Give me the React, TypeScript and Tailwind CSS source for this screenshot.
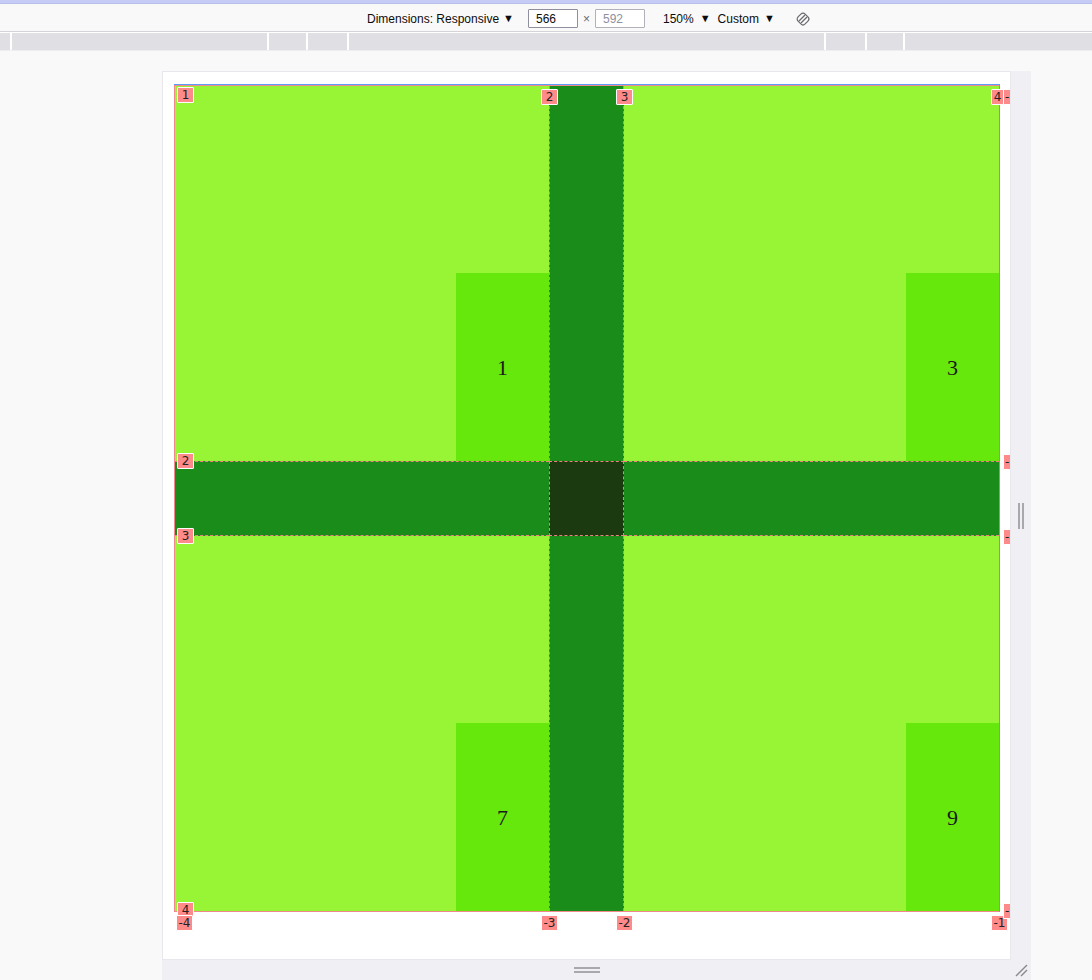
import React from "react";

function Label({ text, className }: { text: string; className: string }) {
    return (
        <div className={`absolute h-[16px] bg-[#ff8a8a] border border-white rounded-[1px] text-[12px] leading-[14px] text-[#222] flex items-center justify-center ${className}`}
            style={{ fontFamily: '"DejaVu Sans", sans-serif' }}>
            {text}
        </div>
    )
}

function Corner({ n }: { n: string }) {
    return (
        <div className="bg-[#98f535] flex items-end justify-end">
            <div className="w-[93px] h-[188px] bg-[#67e80c] flex items-center justify-center text-[22px] text-[#1a1a1a]"
                style={{ fontFamily: '"Liberation Serif", serif' }}>
                {n}
            </div>
        </div>
    )
}

function RotateIcon() {
    return (
        <svg width="16" height="16" viewBox="0 0 16 16" fill="none" stroke="#6a6a6f" strokeWidth="1.2">
            <rect x="3" y="3" width="10" height="10" rx="3" transform="rotate(45 8 8)" />
            <line x1="4" y1="10" x2="10" y2="4" />
            <line x1="6" y1="12" x2="12" y2="6" />
        </svg>
    )
}

export default function App() {
    return (
        <div className="w-[1092px] h-[980px] overflow-hidden bg-[#f9f9fa] flex flex-col" style={{ fontFamily: '"Liberation Sans", "Noto Sans", sans-serif' }}>
            {/* top accent */}
            <div className="h-[4px] bg-[#c5cdf7] border-b border-[#b9bfe8]" />

            {/* toolbar */}
            <div className="h-[28px] flex items-center text-[12px] text-[#0c0c0d] pl-[367px] pt-[2px] border-b border-[#d4d4d8]">
                <span>Dimensions: Responsive</span>
                <span className="ml-[4px] text-[11px]">▼</span>
                <div className="ml-[14px] w-[50px] h-[19px] border border-[#8f8f9d] bg-white rounded-[1px] flex items-center pl-[7px]">566</div>
                <span className="mx-[5px] text-[#6a6a6f]">×</span>
                <div className="w-[50px] h-[19px] border border-[#b1b1b9] bg-white rounded-[1px] flex items-center pl-[7px] text-[#8f8f9d]">592</div>
                <span className="ml-[18px]">150%</span>
                <span className="ml-[6px] text-[11px]">▼</span>
                <span className="ml-[7px]">Custom</span>
                <span className="ml-[5px] text-[11px]">▼</span>
                <div className="ml-[20px] flex items-center"><RotateIcon /></div>
            </div>

            {/* ruler */}
            <div className="h-[19px] border-t border-white flex bg-[#dfdfe4] border-b border-b-[#eeeef0]">
                <div className="w-[10px]" />
                <div className="w-[2px] bg-white" />
                <div className="w-[255px]" />
                <div className="w-[2px] bg-white" />
                <div className="w-[37px]" />
                <div className="w-[2px] bg-white" />
                <div className="w-[39px]" />
                <div className="w-[2px] bg-white" />
                <div className="w-[475px]" />
                <div className="w-[2px] bg-white" />
                <div className="w-[39px]" />
                <div className="w-[2px] bg-white" />
                <div className="w-[36px]" />
                <div className="w-[2px] bg-white" />
                <div className="flex-1" />
            </div>

            {/* page area */}
            <div className="flex-1 pl-[162px] pt-[20px]">
                <div className="w-[869px] flex flex-col">
                    <div className="flex">
                        {/* viewport */}
                        <div className="relative w-[849px] h-[889px] bg-white border border-[#e8e8ec] overflow-hidden">
                            <div className="ml-[11px] mt-[12px] w-[826px] border-t border-r border-[#5b9dfa]">
                                <div className="grid grid-cols-[374px_75px_375px] grid-rows-[375px_75px_375px] border border-[#f08a8a]">
                                    <Corner n="1" />
                                    <div className="bg-[#1a8c1a] border-x border-dashed border-[#f08080]" />
                                    <Corner n="3" />
                                    <div className="bg-[#1a8c1a] border-y border-dashed border-[#f08080]" />
                                    <div className="bg-[#1b3a10] border border-dashed border-[#f08080]" />
                                    <div className="bg-[#1a8c1a] border-y border-dashed border-[#f08080]" />
                                    <Corner n="7" />
                                    <div className="bg-[#1a8c1a] border-x border-dashed border-[#f08080]" />
                                    <Corner n="9" />
                                </div>
                            </div>

                            {/* grid line labels */}
                            <Label text="1" className="w-[17px] left-[14px] top-[15px]" />
                            <Label text="2" className="w-[17px] left-[378px] top-[17px]" />
                            <Label text="3" className="w-[17px] left-[453px] top-[17px]" />
                            <Label text="4" className="w-[13px] left-[828px] top-[17px]" />
                            <Label text="-" className="w-[8px] left-[840px] top-[17px] justify-start pl-[1px]" />

                            <Label text="2" className="w-[17px] left-[14px] top-[381px]" />
                            <Label text="3" className="w-[17px] left-[14px] top-[456px]" />
                            <Label text="-" className="w-[8px] left-[840px] top-[382px] justify-start pl-[1px]" />
                            <Label text="-" className="w-[8px] left-[840px] top-[457px] justify-start pl-[1px]" />

                            <Label text="4" className="w-[17px] left-[14px] top-[830px]" />
                            <Label text="-4" className="w-[17px] left-[13px] top-[843px]" />
                            <Label text="-3" className="w-[17px] left-[378px] top-[843px]" />
                            <Label text="-2" className="w-[17px] left-[453px] top-[843px]" />
                            <Label text="-1" className="w-[17px] left-[828px] top-[843px]" />
                            <Label text="-" className="w-[8px] left-[840px] top-[831px] justify-start pl-[1px]" />
                        </div>
                        {/* right resize strip */}
                        <div className="w-[20px] bg-[#f0f0f4] flex items-center justify-center gap-[2px]">
                            <div className="w-[2px] h-[26px] bg-[#a9a9ad]" />
                            <div className="w-[2px] h-[26px] bg-[#a9a9ad]" />
                        </div>
                    </div>
                    {/* bottom resize strip */}
                    <div className="h-[20px] bg-[#f0f0f4] flex">
                        <div className="w-[849px] flex flex-col items-center justify-center gap-[2px]">
                            <div className="w-[26px] h-[2px] bg-[#a9a9ad]" />
                            <div className="w-[26px] h-[2px] bg-[#a9a9ad]" />
                        </div>
                        <div className="w-[20px] flex items-center justify-center">
                            <svg width="14" height="14" viewBox="0 0 14 14" stroke="#8a8a8e" strokeWidth="1.5">
                                <line x1="2" y1="13" x2="13" y2="2" />
                                <line x1="7" y1="13" x2="13" y2="7" />
                            </svg>
                        </div>
                    </div>
                </div>
            </div>
        </div>
    )
}
